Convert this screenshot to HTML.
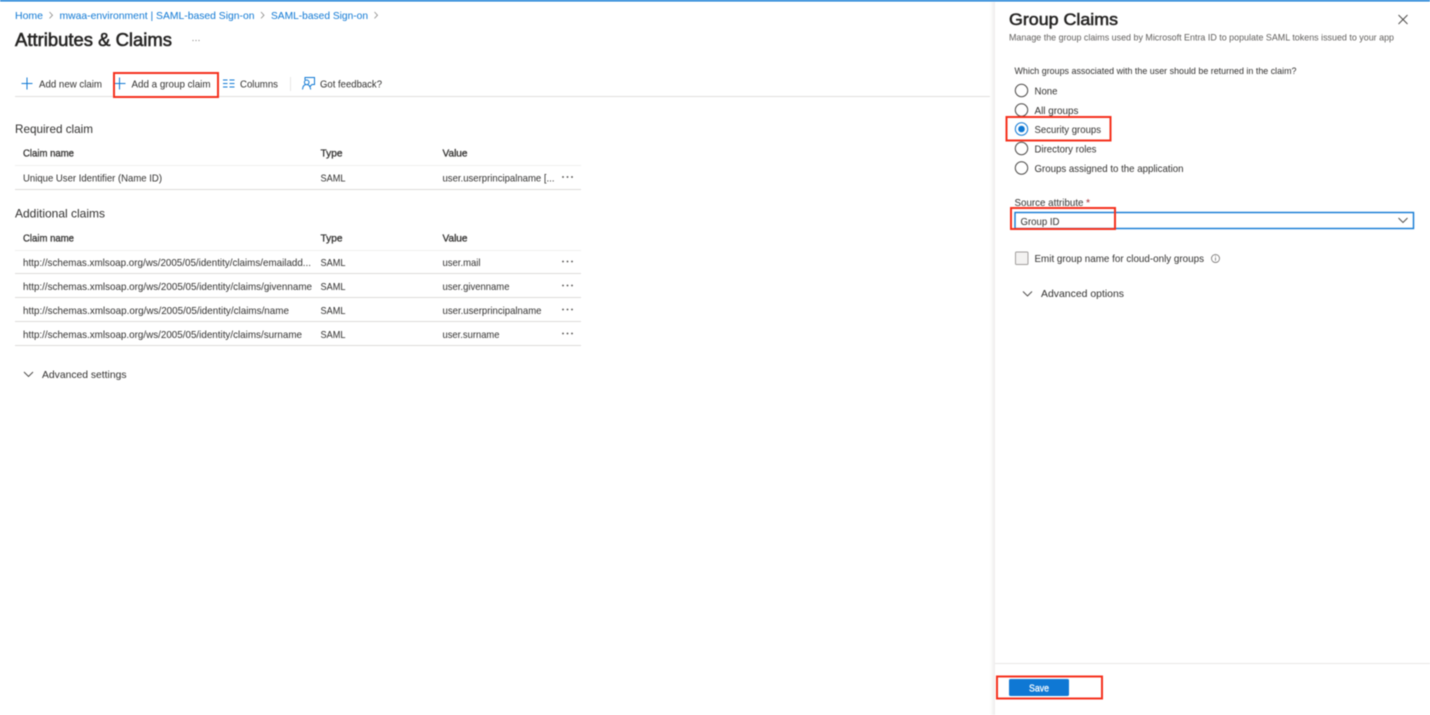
<!DOCTYPE html>
<html lang="en"><head><meta charset="utf-8"><title>Attributes &amp; Claims</title>
<style>
html,body{margin:0;padding:0;background:#fff;width:1430px;height:715px;overflow:hidden}
svg{display:block;position:absolute;left:0;top:0;filter:blur(.45px)}
text{font-family:"Liberation Sans",sans-serif;font-size:10.5px;fill:#323130}
.l{fill:#0f78d4}
.s{stroke:#323130;stroke-width:.3px}
.h{stroke:#252423;stroke-width:.55px;fill:#252423}
.n{fill:none}
</style></head><body>
<svg width="1430" height="715" viewBox="0 0 1430 715" xmlns="http://www.w3.org/2000/svg">
<defs><linearGradient id="sh" x1="0" x2="1" y1="0" y2="0"><stop offset="0" stop-color="#fff"/><stop offset="1" stop-color="#eeedec"/></linearGradient></defs>
<rect width="1430" height="715" fill="#fff"/>
<rect width="1430" height="1.500" fill="#0f78d4"/>

<!-- breadcrumb -->
<text class="l" x="15" y="19" textLength="28" lengthAdjust="spacingAndGlyphs">Home</text>
<path d="M49.500 12l3 3.200-3 3.200" class="n" stroke="#8a8886" stroke-width=".8"/>
<text class="l" x="59.500" y="19" textLength="195" lengthAdjust="spacingAndGlyphs">mwaa-environment | SAML-based Sign-on</text>
<path d="M261 12l3 3.200-3 3.200" class="n" stroke="#8a8886" stroke-width=".8"/>
<text class="l" x="271" y="19" textLength="97" lengthAdjust="spacingAndGlyphs">SAML-based Sign-on</text>
<path d="M374.500 12l3 3.200-3 3.200" class="n" stroke="#8a8886" stroke-width=".8"/>

<text x="15" y="46" style="font-size:18px" class="h" textLength="157" lengthAdjust="spacingAndGlyphs">Attributes &amp; Claims</text>
<g fill="#8a8886"><circle cx="193" cy="40.500" r=".6"/><circle cx="196" cy="40.500" r=".6"/><circle cx="199" cy="40.500" r=".6"/></g>

<!-- toolbar -->
<path d="M27 77.500v12M21.500 83.500h11" class="n" stroke="#0f78d4" stroke-width="1"/>
<text x="39" y="87.500" textLength="63" lengthAdjust="spacingAndGlyphs">Add new claim</text>
<path d="M119.500 77.500v12M114.500 83.500h11" class="n" stroke="#0f78d4" stroke-width="1"/>
<text x="131.500" y="87.500" textLength="79" lengthAdjust="spacingAndGlyphs">Add a group claim</text>
<path d="M223 80h4.500M223 83.500h4.500M223 87h4.500M229.500 80h5M229.500 83.500h5M229.500 87h5" class="n" stroke="#0f78d4" stroke-width="1"/>
<text x="240" y="87.500" textLength="38" lengthAdjust="spacingAndGlyphs">Columns</text>
<rect x="290" y="77" width="1" height="14" fill="#e8e7e6"/>
<path d="M305 80v-2.500h9.500v7h-2.500l-2 2M302.500 89.500c.3-3.300 1.800-5 4-5s3.700 1.700 4.200 5" class="n" stroke="#0f78d4" stroke-width="1"/>
<circle cx="306.700" cy="82.300" r="2.300" fill="#fff" stroke="#0f78d4" stroke-width="1"/>
<text x="320" y="87.500" textLength="62" lengthAdjust="spacingAndGlyphs">Got feedback?</text>
<rect x="15" y="96" width="978" height="1" fill="#e1dfdd"/>

<!-- red toolbar box -->
<rect x="114" y="73" width="104" height="24" class="n" stroke="#f5301c" stroke-width="2"/>

<!-- required claim -->
<text x="15" y="133" style="font-size:12px" textLength="78" lengthAdjust="spacingAndGlyphs">Required claim</text>
<text x="23" y="156.500" class="s" textLength="51" lengthAdjust="spacingAndGlyphs">Claim name</text>
<text x="320.500" y="156.500" class="s" textLength="22" lengthAdjust="spacingAndGlyphs">Type</text>
<text x="442.500" y="156.500" class="s" textLength="25" lengthAdjust="spacingAndGlyphs">Value</text>
<rect x="15" y="165" width="566" height="1" fill="#f0efee"/>
<text x="23" y="181.500" textLength="139" lengthAdjust="spacingAndGlyphs">Unique User Identifier (Name ID)</text>
<text x="320.500" y="181.500" textLength="25" lengthAdjust="spacingAndGlyphs">SAML</text>
<text x="442.500" y="181.500" textLength="112" lengthAdjust="spacingAndGlyphs">user.userprincipalname [...</text>
<g fill="#484644"><circle cx="563" cy="177" r=".9"/><circle cx="567.500" cy="177" r=".9"/><circle cx="572" cy="177" r=".9"/></g>
<rect x="15" y="189" width="566" height="1" fill="#dddbd9"/>

<!-- additional claims -->
<text x="15" y="217.500" style="font-size:12px" textLength="90" lengthAdjust="spacingAndGlyphs">Additional claims</text>
<text x="23" y="241.500" class="s" textLength="51" lengthAdjust="spacingAndGlyphs">Claim name</text>
<text x="320.500" y="241.500" class="s" textLength="22" lengthAdjust="spacingAndGlyphs">Type</text>
<text x="442.500" y="241.500" class="s" textLength="25" lengthAdjust="spacingAndGlyphs">Value</text>
<rect x="15" y="250" width="566" height="1" fill="#f0efee"/>

<text x="23" y="266" textLength="288" lengthAdjust="spacingAndGlyphs">http://schemas.xmlsoap.org/ws/2005/05/identity/claims/emailadd...</text>
<text x="320.500" y="266" textLength="25" lengthAdjust="spacingAndGlyphs">SAML</text>
<text x="442.500" y="266" textLength="38" lengthAdjust="spacingAndGlyphs">user.mail</text>
<g fill="#484644"><circle cx="563" cy="261.500" r=".9"/><circle cx="567.500" cy="261.500" r=".9"/><circle cx="572" cy="261.500" r=".9"/></g>
<rect x="15" y="273" width="566" height="1" fill="#dddbd9"/>

<text x="23" y="290" textLength="289" lengthAdjust="spacingAndGlyphs">http://schemas.xmlsoap.org/ws/2005/05/identity/claims/givenname</text>
<text x="320.500" y="290" textLength="25" lengthAdjust="spacingAndGlyphs">SAML</text>
<text x="442.500" y="290" textLength="67" lengthAdjust="spacingAndGlyphs">user.givenname</text>
<g fill="#484644"><circle cx="563" cy="285.500" r=".9"/><circle cx="567.500" cy="285.500" r=".9"/><circle cx="572" cy="285.500" r=".9"/></g>
<rect x="15" y="297" width="566" height="1" fill="#dddbd9"/>

<text x="23" y="314" textLength="266" lengthAdjust="spacingAndGlyphs">http://schemas.xmlsoap.org/ws/2005/05/identity/claims/name</text>
<text x="320.500" y="314" textLength="25" lengthAdjust="spacingAndGlyphs">SAML</text>
<text x="442.500" y="314" textLength="99" lengthAdjust="spacingAndGlyphs">user.userprincipalname</text>
<g fill="#484644"><circle cx="563" cy="309.500" r=".9"/><circle cx="567.500" cy="309.500" r=".9"/><circle cx="572" cy="309.500" r=".9"/></g>
<rect x="15" y="321" width="566" height="1" fill="#dddbd9"/>

<text x="23" y="338" textLength="279" lengthAdjust="spacingAndGlyphs">http://schemas.xmlsoap.org/ws/2005/05/identity/claims/surname</text>
<text x="320.500" y="338" textLength="25" lengthAdjust="spacingAndGlyphs">SAML</text>
<text x="442.500" y="338" textLength="57" lengthAdjust="spacingAndGlyphs">user.surname</text>
<g fill="#484644"><circle cx="563" cy="333.500" r=".9"/><circle cx="567.500" cy="333.500" r=".9"/><circle cx="572" cy="333.500" r=".9"/></g>
<rect x="15" y="345" width="566" height="1" fill="#dddbd9"/>

<path d="M24 372l4.500 4.500 4.500-4.500" class="n" stroke="#484644" stroke-width=".9"/>
<text x="42" y="378" textLength="84.500" lengthAdjust="spacingAndGlyphs">Advanced settings</text>

<!-- panel -->
<rect x="990" y="2" width="5" height="713" fill="url(#sh)"/>
<rect x="995" y="2" width="435" height="713" fill="#fff"/>
<text x="1009" y="25" style="font-size:17px" class="h" textLength="109" lengthAdjust="spacingAndGlyphs">Group Claims</text>
<path d="M1398.500 15l9 9M1407.500 15l-9 9" class="n" stroke="#484644" stroke-width=".9"/>
<text x="1009" y="40.500" style="font-size:9.500px;fill:#605e5c" textLength="385" lengthAdjust="spacingAndGlyphs">Manage the group claims used by Microsoft Entra ID to populate SAML tokens issued to your app</text>
<text x="1014.500" y="74" style="font-size:9.500px" textLength="282" lengthAdjust="spacingAndGlyphs">Which groups associated with the user should be returned in the claim?</text>

<circle cx="1021.500" cy="90.500" r="6.200" fill="#fff" stroke="#4a4846" stroke-width="1"/>
<text x="1034.500" y="94.500" textLength="23" lengthAdjust="spacingAndGlyphs">None</text>
<circle cx="1021.500" cy="110" r="6.200" fill="#fff" stroke="#4a4846" stroke-width="1"/>
<text x="1034.500" y="114" textLength="44" lengthAdjust="spacingAndGlyphs">All groups</text>
<circle cx="1021.500" cy="129" r="6.200" fill="#fff" stroke="#0f78d4" stroke-width="1"/>
<circle cx="1021.500" cy="129" r="3.300" fill="#0f78d4"/>
<text x="1034.500" y="133" textLength="66.500" lengthAdjust="spacingAndGlyphs">Security groups</text>
<circle cx="1021.500" cy="148.500" r="6.200" fill="#fff" stroke="#4a4846" stroke-width="1"/>
<text x="1034.500" y="152.500" textLength="62" lengthAdjust="spacingAndGlyphs">Directory roles</text>
<circle cx="1021.500" cy="168" r="6.200" fill="#fff" stroke="#4a4846" stroke-width="1"/>
<text x="1034.500" y="172" textLength="149" lengthAdjust="spacingAndGlyphs">Groups assigned to the application</text>
<rect x="1006.500" y="117" width="104" height="23.500" class="n" stroke="#f5301c" stroke-width="2"/>

<text x="1014.500" y="206" textLength="69" lengthAdjust="spacingAndGlyphs">Source attribute</text>
<text x="1086" y="206" style="fill:#a4262c">*</text>
<rect x="1015" y="212.500" width="398.500" height="16" fill="#fff" stroke="#0f78d4" stroke-width="1.400"/>
<text x="1020.500" y="225" textLength="39" lengthAdjust="spacingAndGlyphs">Group ID</text>
<path d="M1398.500 218l4.500 4.500 4.500-4.500" class="n" stroke="#484644" stroke-width=".9"/>
<rect x="1011" y="208" width="104" height="21" class="n" stroke="#f5301c" stroke-width="2"/>

<rect x="1015.500" y="252" width="12.500" height="12.500" rx="1" fill="#f3f2f1" stroke="#a19f9d" stroke-width="1"/>
<text x="1034.500" y="262" textLength="169.500" lengthAdjust="spacingAndGlyphs">Emit group name for cloud-only groups</text>
<circle cx="1215.500" cy="258.500" r="4" fill="none" stroke="#605e5c" stroke-width=".7"/>
<path d="M1215.500 257.500v3.200M1215.500 255.800v.8" class="n" stroke="#605e5c" stroke-width=".7"/>

<path d="M1023 291.500l4.500 4.500 4.500-4.500" class="n" stroke="#484644" stroke-width=".9"/>
<text x="1041" y="297" textLength="83" lengthAdjust="spacingAndGlyphs">Advanced options</text>

<rect x="995" y="663" width="435" height="1" fill="#e8e7e6"/>
<rect x="1009" y="679" width="60" height="17" rx="1.500" fill="#0f78d4"/>
<text x="1029" y="691.500" style="fill:#fff;stroke:#fff;stroke-width:.25px" textLength="20" lengthAdjust="spacingAndGlyphs">Save</text>
<rect x="997" y="676.500" width="105" height="22" class="n" stroke="#f5301c" stroke-width="2"/>
</svg>
</body></html>
